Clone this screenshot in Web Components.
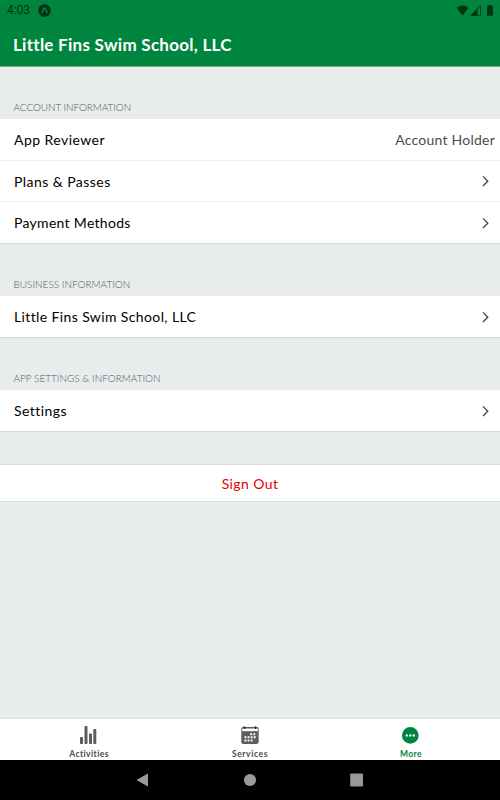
<!DOCTYPE html>
<html lang="en">
<head>
<meta charset="utf-8">
<title>Little Fins Swim School, LLC</title>
<style>
  body {
    margin: 0;
    background: #e8eced;
    font-family: Lato, "Open Sans", sans-serif;
    font-variant-ligatures: none;
  }
</style>
</head>
<body>
<more-screen></more-screen>

<script>
class StatusBar extends HTMLElement {
  constructor() {
    super();
    this.attachShadow({ mode: 'open' }).innerHTML = `
      <style>
        :host {
          display: flex;
          align-items: center;
          height: 20px;
          padding: 0 6px 0 7px;
          color: #003414;
          font: 12px/20px Roboto, sans-serif;
        }
        span { letter-spacing: -0.05px; width: 31px; }
        svg { display: block; }
        .right { margin-left: auto; }
      </style>
      <span>4:03</span>
      <svg width="13" height="13" viewBox="0 0 13 13">
        <circle cx="6.5" cy="6.5" r="6.3" fill="#003414"/>
        <path d="M3.6 9.2 5.8 4.4Q6.5 3.4 7.2 4.4L9.4 9.2" fill="none" stroke="#0a8540" stroke-width="1.4"/>
      </svg>
      <svg class="right" width="38" height="13" viewBox="0 0 38 13">
        <path d="M.5 3.7Q6.500-.8 12.500 3.700L6.500 11.500Z" fill="#003414"/>
        <path d="M15 11.300 24.500 1.800V11.300Z" fill="none" stroke="#003414" stroke-width=".8"/>
        <path d="M14.500 11.700 21.500 4.700V11.700Z" fill="#003414"/>
        <path d="M31 2H32.500V1H35.500V2H37V11.700H31Z" fill="#003414"/>
      </svg>
    `;
  }
}
customElements.define('status-bar', StatusBar);

class AppHeader extends HTMLElement {
  constructor() {
    super();
    this.attachShadow({ mode: 'open' }).innerHTML = `
      <style>
        :host {
          display: block;
          box-sizing: border-box;
          height: 67px;
          background: #00853e;
          border-bottom: 1px solid #7ca886;
        }
        h1 {
          margin: 0;
          padding-left: 13px;
          color: #fff;
          font-size: 17px;
          font-weight: 700;
          line-height: 49px;
          letter-spacing: var(--track, 0);
        }
      </style>
      <status-bar></status-bar>
      <h1><slot></slot></h1>
    `;
  }
}
customElements.define('app-header', AppHeader);

class ListSection extends HTMLElement {
  constructor() {
    super();
    this.attachShadow({ mode: 'open' }).innerHTML = `
      <style>
        :host { display: block; }
        h2 {
          margin: 0;
          padding: 0 13.5px 4px;
          color: #55585a;
          font-size: 10px;
          font-weight: 300;
          line-height: 16px;
          letter-spacing: var(--label-track, 0);
        }
      </style>
      <h2></h2>
      <slot></slot>
    `;
  }

  connectedCallback() {
    this.shadowRoot.querySelector('h2').textContent = this.getAttribute('label');
  }
}
customElements.define('list-section', ListSection);

class ListRow extends HTMLElement {
  constructor() {
    super();
    this.attachShadow({ mode: 'open' }).innerHTML = `
      <style>
        :host {
          display: flex;
          align-items: center;
          justify-content: space-between;
          box-sizing: border-box;
          height: 42px;
          padding: 0 5px 0 14px;
          background: #fff;
          border-bottom: 1px solid #ecedee;
          color: #000;
          font-size: 14px;
          letter-spacing: var(--track, 0);
        }
        :host([short]) { height: 41px; }
        :host([last]) { border-bottom-color: #d5d9da; }
        .detail { color: #4c4c4c; letter-spacing: 0.23px; }
        svg { display: block; }
      </style>
      <span><slot></slot></span>
      <span class="detail"></span>
    `;
  }

  connectedCallback() {
    const detail = this.shadowRoot.querySelector('.detail');
    if (this.hasAttribute('detail')) {
      detail.textContent = this.getAttribute('detail');
    } else {
      detail.innerHTML = `
        <svg width="13" height="14" viewBox="0 0 13 14">
          <path d="M1 2.400 5.800 7.200 1 12" fill="none" stroke="#404040" stroke-width="1.300"/>
        </svg>`;
    }
  }
}
customElements.define('list-row', ListRow);

class SignOutButton extends HTMLElement {
  constructor() {
    super();
    this.attachShadow({ mode: 'open' }).innerHTML = `
      <style>
        :host { display: block; }
        button {
          display: block;
          width: 100%;
          height: 38px;
          padding: 0;
          background: #fff;
          border: solid #d7dbdc;
          border-width: 1px 0;
          color: #e60000;
          font: inherit;
          font-size: 14px;
          letter-spacing: var(--track, 0);
        }
      </style>
      <button type="button"><slot></slot></button>
    `;
  }
}
customElements.define('sign-out-button', SignOutButton);

const TAB_ICONS = {
  activities: `
    <g fill="#5d5d5d">
      <rect x="0" y="12" width="3" height="7" rx=".7"/>
      <rect x="4.500" y="1" width="3" height="18" rx=".7"/>
      <rect x="9" y="8.500" width="3" height="10.500" rx=".7"/>
      <rect x="13.300" y="4" width="3" height="15" rx=".7"/>
    </g>`,
  services: `
    <path d="M2 2H16Q17.700 2 17.700 4V17Q17.700 19 15.500 19H2.500Q.3 19 .3 17V4Q.3 2 2 2Z" fill="#5d5d5d"/>
    <path d="M1.200 3.500H16.800V6.200H1.200Z" fill="#fff"/>
    <path d="M3.500 1.300V4M14.500 1.300V4" stroke="#333" stroke-width="1.500"/>
    <path d="M9.200 9.200H15.500M3.500 12.300H15.500M3.500 15.500H12.500" stroke="#fff" stroke-width="1.900" stroke-dasharray="1.900 1.200"/>`,
  more: `
    <circle cx="8.300" cy="10.400" r="8.300" fill="#00853e"/>
    <g fill="#fff">
      <circle cx="4.800" cy="10.400" r="1.200"/>
      <circle cx="8.300" cy="10.400" r="1.200"/>
      <circle cx="11.800" cy="10.400" r="1.200"/>
    </g>`
};

class TabItem extends HTMLElement {
  constructor() {
    super();
    this.attachShadow({ mode: 'open' }).innerHTML = `
      <style>
        :host {
          display: flex;
          flex-direction: column;
          align-items: center;
          width: 161px;
          color: #4a4a4a;
          font-size: 8.5px;
          font-weight: 700;
          line-height: 12px;
          letter-spacing: var(--track, 0);
        }
        :host([active]) { color: #00853e; }
        svg { display: block; margin: 6px 0 3px; }
      </style>
      <svg width="18" height="20" viewBox="0 0 18 20"></svg>
      <span><slot></slot></span>
    `;
  }

  connectedCallback() {
    this.shadowRoot.querySelector('svg').innerHTML = TAB_ICONS[this.getAttribute('icon')];
  }
}
customElements.define('tab-item', TabItem);

class TabBar extends HTMLElement {
  constructor() {
    super();
    this.attachShadow({ mode: 'open' }).innerHTML = `
      <style>
        :host {
          display: flex;
          justify-content: center;
          box-sizing: border-box;
          height: 42px;
          background: #fff;
          border-top: 1px solid #dbdfe0;
          overflow: hidden;
        }
      </style>
      <slot></slot>
    `;
  }
}
customElements.define('tab-bar', TabBar);

class SystemNav extends HTMLElement {
  constructor() {
    super();
    this.attachShadow({ mode: 'open' }).innerHTML = `
      <style>
        :host {
          display: flex;
          align-items: center;
          justify-content: center;
          gap: 93px;
          height: 40px;
          background: #000;
        }
        svg { display: block; }
      </style>
      <svg width="14" height="14" viewBox="0 0 14 14"><path d="M.3 7 12 .5V13.500Z" fill="#999"/></svg>
      <svg width="14" height="14" viewBox="0 0 14 14"><circle cx="7" cy="7" r="6.100" fill="#999"/></svg>
      <svg width="14" height="14" viewBox="0 0 14 14"><rect x=".2" y=".5" width="12.800" height="13" rx="1" fill="#999"/></svg>
    `;
  }
}
customElements.define('system-nav', SystemNav);

class MoreScreen extends HTMLElement {
  constructor() {
    super();
    this.attachShadow({ mode: 'open' }).innerHTML = `
      <style>
        :host {
          display: flex;
          flex-direction: column;
          height: 800px;
        }
        main { flex: 1; padding-top: 32px; }
        list-section { margin-bottom: 32px; }
      </style>
      <app-header style="--track: 0.27px">Little Fins Swim School, LLC</app-header>
      <main>
        <list-section label="ACCOUNT INFORMATION" style="--label-track: -0.08px">
          <list-row detail="Account Holder" style="--track: 0.45px">App Reviewer</list-row>
          <list-row short style="--track: 0.45px">Plans &amp; Passes</list-row>
          <list-row last style="--track: 0.3px">Payment Methods</list-row>
        </list-section>
        <list-section label="BUSINESS INFORMATION">
          <list-row last style="--track: 0.38px">Little Fins Swim School, LLC</list-row>
        </list-section>
        <list-section label="APP SETTINGS &amp; INFORMATION">
          <list-row last style="--track: 0.45px">Settings</list-row>
        </list-section>
        <sign-out-button style="--track: 0.4px">Sign Out</sign-out-button>
      </main>
      <tab-bar>
        <tab-item icon="activities" style="--track: 0.42px">Activities</tab-item>
        <tab-item icon="services" style="--track: 0.58px">Services</tab-item>
        <tab-item icon="more" active style="--track: 0.35px">More</tab-item>
      </tab-bar>
      <system-nav></system-nav>
    `;
  }
}
customElements.define('more-screen', MoreScreen);
</script>
</body>
</html>
